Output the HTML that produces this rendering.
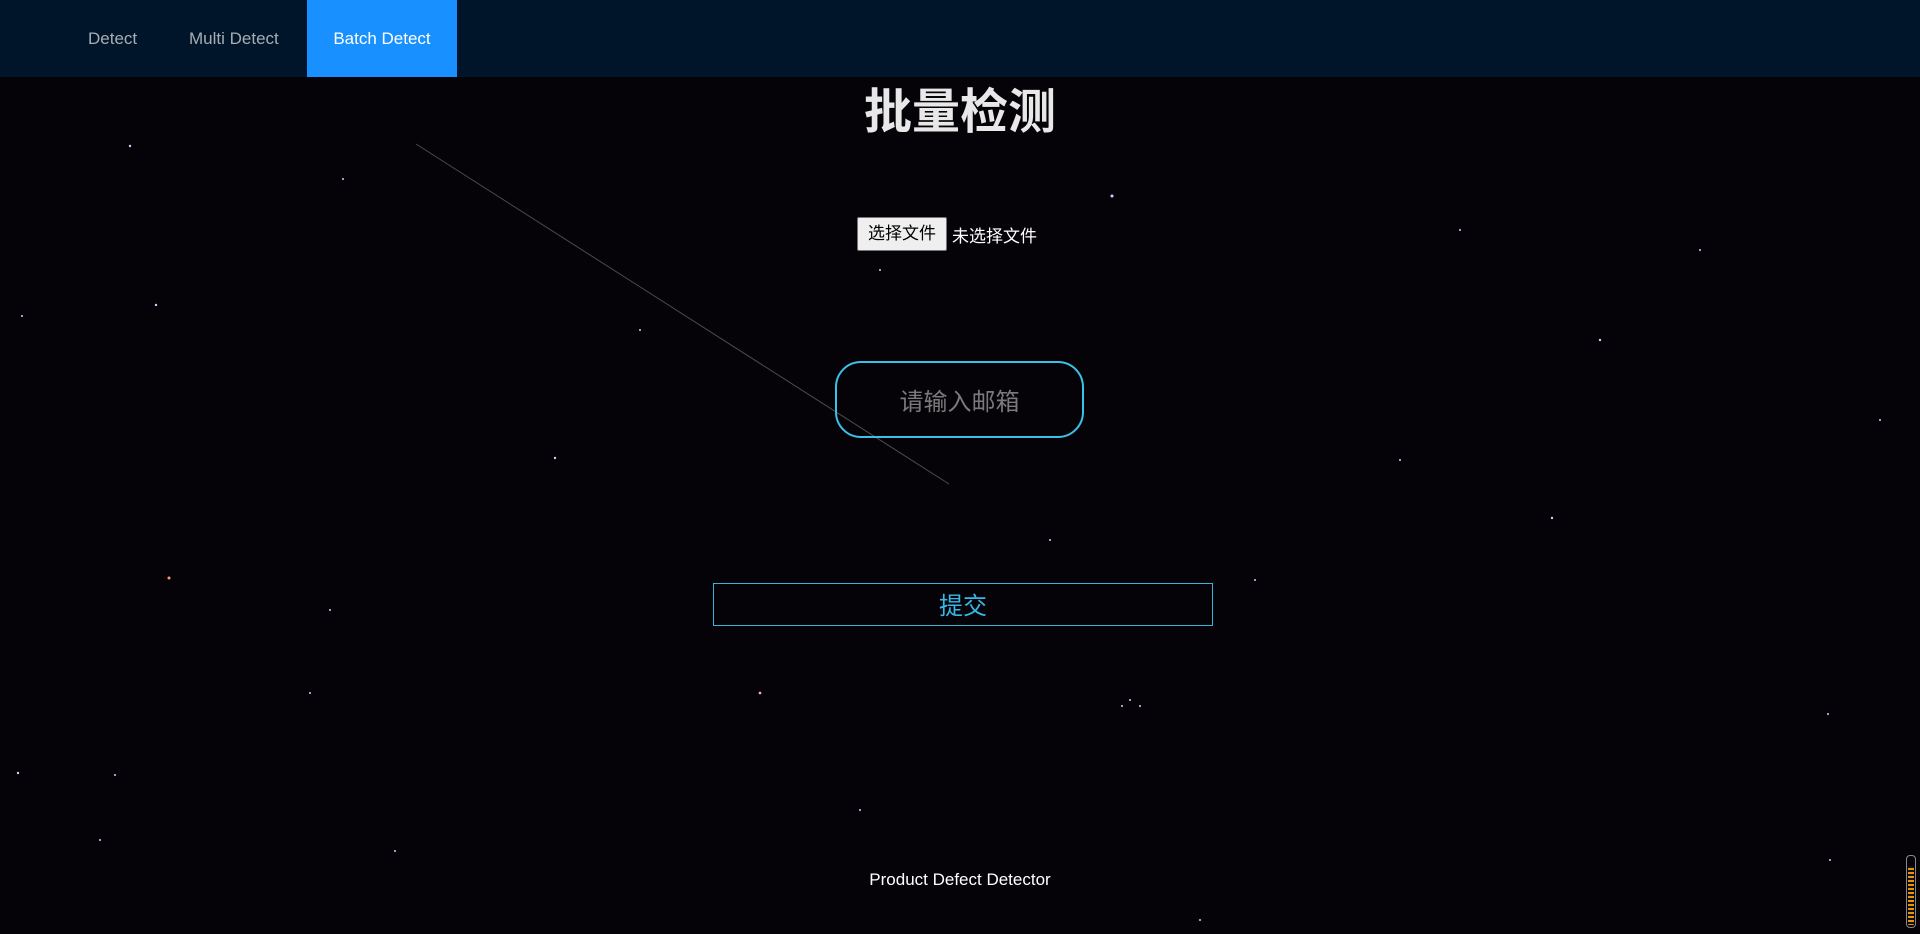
<!DOCTYPE html>
<html><head><meta charset="utf-8"><style>
*{margin:0;padding:0;box-sizing:border-box}
body{width:1920px;height:934px;overflow:hidden;background:#050307;font-family:"Liberation Sans","Noto Sans CJK SC",sans-serif;position:relative}
.nav{position:absolute;left:0;top:0;width:1920px;height:77px;background:#001529}
.nav a{position:absolute;top:0;height:77px;line-height:77px;font-size:17px;color:#a6adb4;text-decoration:none}
.nav .act{background:#1890ff;color:#fff;left:307px;width:150px;text-align:center}
h1{position:absolute;left:0;width:1920px;top:72px;text-align:center;font-size:48px;font-weight:bold;color:#e8e8e8}
.file{position:absolute;left:857px;top:217px;height:34px;display:flex;align-items:center;font-size:17px;color:#fff}
.file span.b{display:inline-block;width:90px;height:34px;line-height:32px;text-align:center;background:#efefef;border:1px solid #767676;border-radius:2px;color:#000;margin-right:5px}
.email{position:absolute;left:835px;top:361px;width:249px;height:77px;border:2px solid #3cc0e6;border-radius:26px;text-align:center;line-height:79px;font-size:24px;color:#7a7a7a}
.sub{position:absolute;left:713px;top:583px;width:500px;height:43px;border:1px solid #33b5dd;text-align:center;line-height:46px;font-size:24px;color:#36b8e8}
.foot{position:absolute;left:0;width:1920px;top:870px;text-align:center;font-size:17px;color:#fff}
.sb{position:absolute;left:1906px;top:855px;width:10px;height:73px;border:1px solid #888;border-radius:4px;background:repeating-linear-gradient(#e8930a 0 2px,#111 2px 4px);background-clip:content-box;padding:10px 1px 2px}
</style></head><body>
<svg width="1920" height="934" style="position:absolute;left:0;top:0">
<line x1="416" y1="144" x2="949" y2="484" stroke="#8a8480" stroke-width="1" opacity=".55"/>
<g fill="#cfd0ff">
<circle cx="130" cy="146" r="1.2"/><circle cx="1112" cy="196" r="1.5"/><circle cx="156" cy="305" r="1.2"/><circle cx="343" cy="179" r="1"/><circle cx="22" cy="316" r="1"/><circle cx="880" cy="270" r="1"/><circle cx="1600" cy="340" r="1.2"/><circle cx="1880" cy="420" r="1"/><circle cx="1552" cy="518" r="1.2"/><circle cx="760" cy="693" r="1.2"/><circle cx="310" cy="693" r="1"/><circle cx="18" cy="773" r="1.2"/><circle cx="115" cy="775" r="1"/><circle cx="1130" cy="700" r="1"/><circle cx="1122" cy="706" r="1"/><circle cx="1140" cy="706" r="1"/><circle cx="1828" cy="714" r="1"/><circle cx="555" cy="458" r="1.2"/><circle cx="1700" cy="250" r="1"/><circle cx="1400" cy="460" r="1"/><circle cx="100" cy="840" r="1"/><circle cx="395" cy="851" r="1"/><circle cx="1050" cy="540" r="1"/><circle cx="860" cy="810" r="1"/><circle cx="1830" cy="860" r="1"/><circle cx="1255" cy="580" r="1"/><circle cx="640" cy="330" r="1"/><circle cx="1200" cy="920" r="1"/><circle cx="330" cy="610" r="1"/><circle cx="1460" cy="230" r="1"/>
</g>
<circle cx="169" cy="578" r="1.5" fill="#ff9a6a"/><circle cx="760" cy="693" r="1.3" fill="#ffb0b0"/>
</svg>
<div class="nav"><a style="left:88px">Detect</a><a style="left:189px">Multi Detect</a><a class="act">Batch Detect</a></div>
<h1>批量检测</h1>
<div class="file"><span class="b">选择文件</span>未选择文件</div>
<div class="email">请输入邮箱</div>
<div class="sub">提交</div>
<div class="foot">Product Defect Detector</div>
<div class="sb"></div>
</body></html>
